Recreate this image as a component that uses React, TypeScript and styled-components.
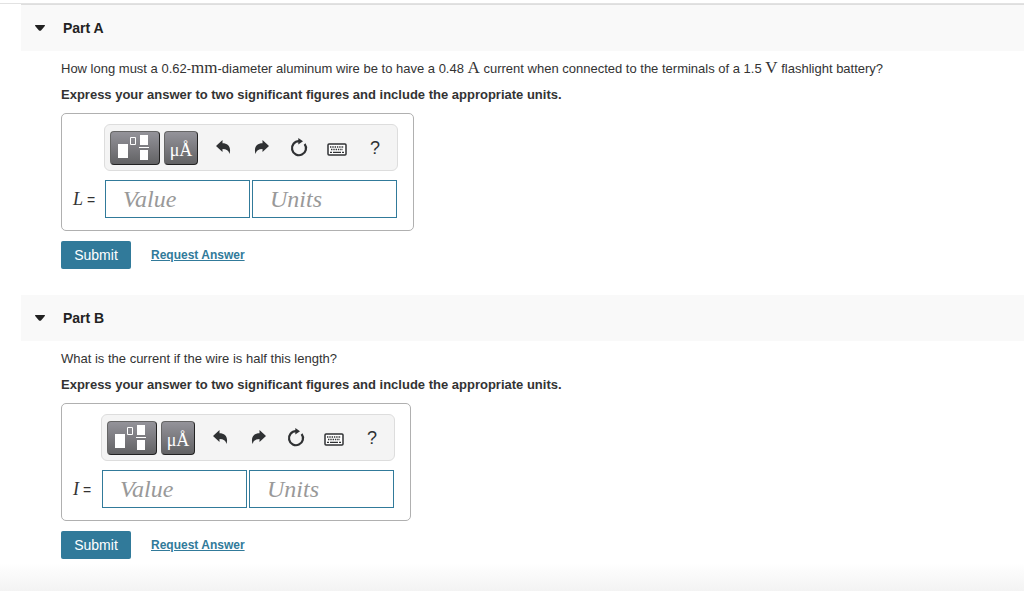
import React from "react";
import styled, { createGlobalStyle } from "styled-components";

const GlobalStyle = createGlobalStyle`
  *, *::before, *::after { box-sizing: border-box; }
  body {
    margin: 0;
    background: #fff;
    color: #333;
    font-family: "Liberation Sans", Arial, sans-serif;
    font-size: 13px;
    line-height: 16px;
  }
`;

const serif = `"Liberation Serif", "Times New Roman", serif`;
const accent = "#317a9a";

const Page = styled.main`
  min-height: 100vh;
  padding-top: 3px;
  background: linear-gradient(to top, #f3f3f3, #fff 28px);
`;

const TopRule = styled.div`
  height: 1px;
  background: #e2e2e2;
`;

const Content = styled.div`
  margin-left: 21px;
  border-top: 1px solid #dedede;
`;

const Section = styled.section`
  padding-bottom: 26px;
`;

const PartHeader = styled.h2`
  margin: 0;
  background: #f9f9f9;
`;

const PartToggle = styled.button`
  display: flex;
  align-items: center;
  gap: 18px;
  width: 100%;
  height: 46px;
  padding: 0 14px;
  border: 0;
  background: none;
  color: #222;
  font: inherit;
  font-size: 14px;
  font-weight: bold;
  text-align: left;
`;

const PartBody = styled.div`
  padding: 9px 20px 0 40px;
`;

const Question = styled.p`
  margin: 0;
  line-height: 18px;
`;

const Instructions = styled.p`
  margin: 8px 0 0;
  font-weight: bold;
  line-height: 18px;
`;

const MathUnit = styled.span`
  font-family: ${serif};
  font-size: 17px;
  line-height: 16px;
`;

const AnswerBox = styled.div<{ $labelWidth: number }>`
  display: grid;
  grid-template-columns: ${(p) => p.$labelWidth}px auto;
  align-items: center;
  row-gap: 9px;
  width: fit-content;
  margin-top: 9px;
  padding: 10px 16px 12px 11px;
  border: 1px solid #b0b0b0;
  border-radius: 5px;
`;

const Toolbar = styled.div`
  grid-column: 2;
  display: flex;
  align-items: center;
  height: 47px;
  padding: 0 3px 0 5px;
  margin: 0 -1px;
  border: 1px solid #ddd;
  border-radius: 6px;
  background: #f4f4f4;
`;

const Palettes = styled.div`
  display: flex;
  gap: 4px;
  margin-right: 6px;
`;

const PaletteButton = styled.button<{ $width: number }>`
  display: flex;
  align-items: center;
  justify-content: center;
  width: ${(p) => p.$width}px;
  height: 34px;
  padding: 0;
  border: 1px solid;
  border-color: #666 #222 #222 #666;
  border-radius: 4px;
  background: linear-gradient(#94939a, #626264);
  color: #fff;
  font-family: ${serif};
  font-size: 18px;
  line-height: 24px;
`;

const UnitSymbols = styled.span`
  padding-top: 4px;
`;

const ToolButton = styled.button`
  display: flex;
  align-items: center;
  justify-content: center;
  width: 38px;
  height: 34px;
  padding: 0;
  border: 0;
  background: none;
  color: #2f3133;
  font: inherit;
  font-size: 18px;
`;

const AnswerLabel = styled.label`
  font-size: 14px;
  white-space: nowrap;
`;

const Variable = styled.i`
  font-family: ${serif};
  font-size: 18px;
`;

const Fields = styled.div`
  display: flex;
  gap: 2px;
`;

const Field = styled.input`
  width: 145px;
  height: 38px;
  padding: 0 17px;
  border: 1px solid ${accent};
  border-radius: 0;
  background: #fff;
  color: #333;
  font-family: ${serif};
  font-size: 24px;

  &::placeholder {
    color: #999;
    font-style: italic;
    opacity: 1;
  }
`;

const Actions = styled.div`
  display: flex;
  align-items: center;
  gap: 20px;
  margin-top: 10px;
`;

const SubmitButton = styled.button`
  width: 70px;
  height: 28px;
  padding: 0;
  border: 0;
  border-radius: 2px;
  background: ${accent};
  color: #fff;
  font: inherit;
  font-size: 14px;
`;

const RequestLink = styled.a`
  color: ${accent};
  font-size: 12px;
  font-weight: bold;
`;

const Caret = () => (
  <svg width="10" height="6" viewBox="0 0 10 6" aria-hidden="true">
    <path d="M0 0H10Q10 1 9 2L6 5.4Q5 6 4 5.4L1 2Q0 1 0 0Z" fill="#222" />
  </svg>
);

const TemplatesIcon = () => (
  <svg width="48" height="32" viewBox="0 0 48 32" aria-hidden="true">
    <path d="M7 12h10v14H7zM29 3h8v10h-8zM29 18h8v10h-8zM28 15h10v1H28z" fill="#fff" />
    <path d="M19.5 5.5h5v7h-5z" fill="none" stroke="#fff" />
  </svg>
);

const arrowPath =
  "M0 6 6.5 0V3.2C12 3.2 15.5 7 13.5 14Q12.5 9 6.5 9V12Z";

const UndoIcon = () => (
  <svg width="15" height="16" viewBox="0 0 15 16" aria-hidden="true">
    <path d={arrowPath} fill="currentColor" />
  </svg>
);

const RedoIcon = () => (
  <svg width="15" height="16" viewBox="0 0 15 16" aria-hidden="true">
    <path d={arrowPath} transform="translate(15 0) scale(-1 1)" fill="currentColor" />
  </svg>
);

const ResetIcon = () => (
  <svg width="18" height="20" viewBox="0 0 18 20" aria-hidden="true">
    <path d="M9 3.2A7 7 0 1 0 14.6 6" fill="none" stroke="currentColor" strokeWidth="2.2" />
    <path d="M8.3 0 13 3.2 8.3 6.5Z" fill="currentColor" />
  </svg>
);

const KeyboardIcon = () => (
  <svg width="20" height="16" viewBox="0 0 20 16" aria-hidden="true">
    <rect x="1" y="4" width="18" height="11" rx="1" fill="#fff" stroke="currentColor" strokeWidth="1.5" />
    <path d="M3 7h14M4 9.5h12" stroke="currentColor" strokeWidth="1.4" strokeDasharray="1.4 0.9" />
    <path d="M3 12.4h2M6 12.4h8M15 12.4h2" stroke="currentColor" strokeWidth="1.2" />
  </svg>
);

interface PartProps {
  name: string;
  id: string;
  variable: string;
  labelWidth: number;
  children: React.ReactNode;
}

function Part({ name, id, variable, labelWidth, children }: PartProps) {
  return (
    <Section>
      <PartHeader>
        <PartToggle type="button" aria-expanded="true">
          <Caret />
          {name}
        </PartToggle>
      </PartHeader>
      <PartBody>
        <Question>{children}</Question>
        <Instructions>
          Express your answer to two significant figures and include the appropriate units.
        </Instructions>
        <AnswerBox $labelWidth={labelWidth}>
          <Toolbar role="toolbar" aria-label="Answer tools">
            <Palettes>
              <PaletteButton type="button" $width={50} aria-label="Templates">
                <TemplatesIcon />
              </PaletteButton>
              <PaletteButton type="button" $width={34}>
                <UnitSymbols>μÅ</UnitSymbols>
              </PaletteButton>
            </Palettes>
            <ToolButton type="button" aria-label="Undo">
              <UndoIcon />
            </ToolButton>
            <ToolButton type="button" aria-label="Redo">
              <RedoIcon />
            </ToolButton>
            <ToolButton type="button" aria-label="Reset">
              <ResetIcon />
            </ToolButton>
            <ToolButton type="button" aria-label="Keyboard shortcuts">
              <KeyboardIcon />
            </ToolButton>
            <ToolButton type="button">?</ToolButton>
          </Toolbar>
          <AnswerLabel htmlFor={`${id}-value`}>
            <Variable>{variable}</Variable> =
          </AnswerLabel>
          <Fields>
            <Field id={`${id}-value`} placeholder="Value" />
            <Field aria-label="Units" placeholder="Units" />
          </Fields>
        </AnswerBox>
        <Actions>
          <SubmitButton type="button">Submit</SubmitButton>
          <RequestLink href="#request">Request Answer</RequestLink>
        </Actions>
      </PartBody>
    </Section>
  );
}

export default function App() {
  return (
    <>
      <GlobalStyle />
      <Page>
        <TopRule />
        <Content>
          <Part name="Part A" id="part-a" variable="L" labelWidth={32}>
            How long must a 0.62-<MathUnit>mm</MathUnit>-diameter aluminum wire be to have a 0.48{" "}
            <MathUnit>A</MathUnit> current when connected to the terminals of a 1.5{" "}
            <MathUnit>V</MathUnit> flashlight battery?
          </Part>
          <Part name="Part B" id="part-b" variable="I" labelWidth={29}>
            What is the current if the wire is half this length?
          </Part>
        </Content>
      </Page>
    </>
  );
}
